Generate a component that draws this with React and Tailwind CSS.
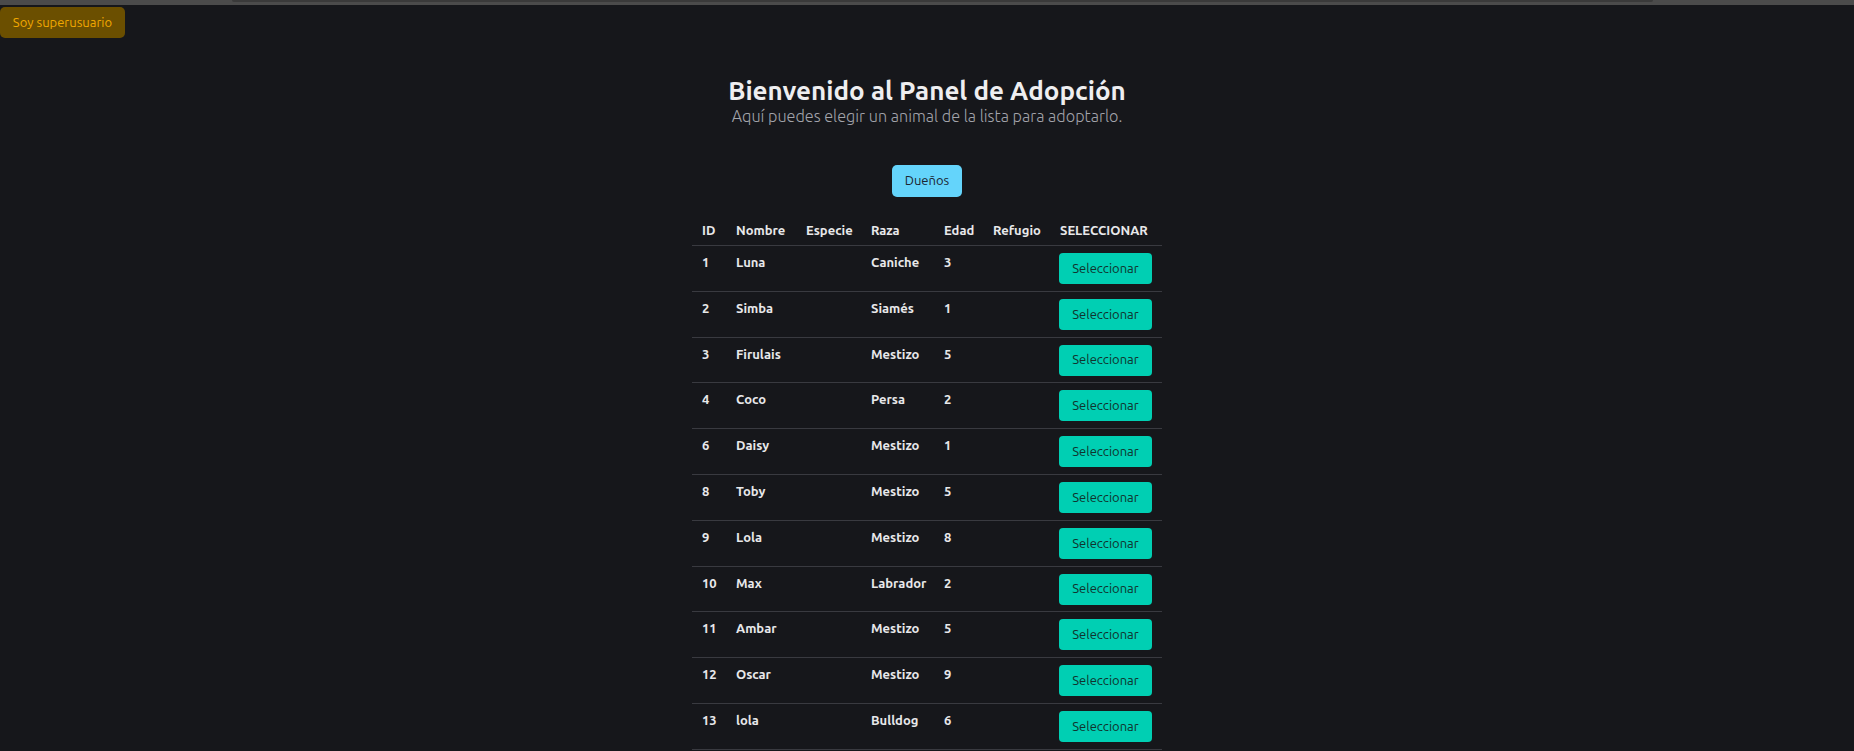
import React from "react";

const rows = [
  [1, "Luna", "Caniche", 3],
  [2, "Simba", "Siamés", 1],
  [3, "Firulais", "Mestizo", 5],
  [4, "Coco", "Persa", 2],
  [6, "Daisy", "Mestizo", 1],
  [8, "Toby", "Mestizo", 5],
  [9, "Lola", "Mestizo", 8],
  [10, "Max", "Labrador", 2],
  [11, "Ambar", "Mestizo", 5],
  [12, "Oscar", "Mestizo", 9],
  [13, "lola", "Bulldog", 6],
];

export default function App() {
  return (
    <div
      className="min-h-screen bg-[#16171b] text-[#e8e8ea]"
      style={{ fontFamily: '"Ubuntu", "Noto Sans", sans-serif' }}
    >
      <div className="h-[5px] bg-[#4b4b4b] flex">
        <div className="ml-[232px] w-[1421px] h-[2px] bg-[#3a3a3a] rounded-b-[2px]" />
      </div>
      <div className="pt-[2px]">
        <button className="h-[31px] w-[125px] rounded-[5px] bg-[#6b4f00] text-[#f2a900] text-[13px] leading-[31px] text-center">
          Soy superusuario
        </button>
      </div>
      <div className="flex flex-col items-center">
        <h1 className="mt-[38px] text-[26px] leading-[30px] font-bold text-[#eeeef0]">
          Bienvenido al Panel de Adopción
        </h1>
        <p className="text-[16.2px] leading-[20px] text-[#a3a4ab] font-light">
          Aquí puedes elegir un animal de la lista para adoptarlo.
        </p>
        <button className="mt-[39px] h-[32px] w-[70px] rounded-[5px] bg-[#64d4fb] text-[#1b2430] text-[13px]">
          Dueños
        </button>
        <table className="mt-[16px] table-fixed border-collapse w-[470px] text-[13px] font-semibold">
          <colgroup>
            <col className="w-[34px]" />
            <col className="w-[70px]" />
            <col className="w-[65px]" />
            <col className="w-[73px]" />
            <col className="w-[49px]" />
            <col className="w-[67px]" />
            <col className="w-[112px]" />
          </colgroup>
          <thead>
            <tr className="border-b border-[#393a40]">
              {["ID", "Nombre", "Especie", "Raza", "Edad", "Refugio", "SELECCIONAR"].map((h) => (
                <th
                  key={h}
                  className="text-left font-semibold pl-[10px] pr-0 pt-[7px] pb-[5px] leading-[20px] whitespace-nowrap"
                >
                  {h}
                </th>
              ))}
            </tr>
          </thead>
          <tbody>
            {rows.map(([id, name, raza, edad]) => (
              <tr key={id} className="border-b border-[#393a40]">
                <td className="align-top pl-[10px] pt-[6px] leading-[20px]">{id}</td>
                <td className="align-top pl-[10px] pt-[6px] leading-[20px]">{name}</td>
                <td className="align-top pl-[10px] pt-[6px] leading-[20px]"></td>
                <td className="align-top pl-[10px] pt-[6px] leading-[20px] whitespace-nowrap">{raza}</td>
                <td className="align-top pl-[10px] pt-[6px] leading-[20px]">{edad}</td>
                <td className="align-top pl-[10px] pt-[6px] leading-[20px]"></td>
                <td className="align-top pl-[9px] pt-[7px] pb-[6.8px]">
                  <button className="block h-[31px] w-[93px] rounded-[4px] bg-[#00cfb3] text-[#10332e] text-[13px] font-normal">
                    Seleccionar
                  </button>
                </td>
              </tr>
            ))}
          </tbody>
        </table>
      </div>
    </div>
  );
}
